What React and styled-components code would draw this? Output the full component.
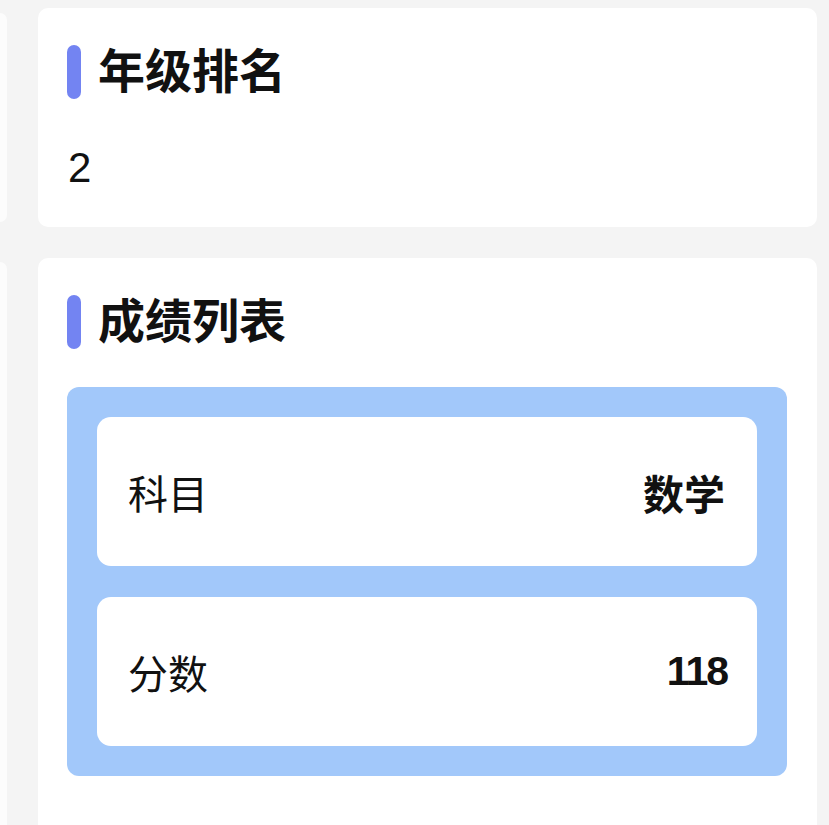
import React from "react";
import styled, { createGlobalStyle } from "styled-components";

const Global = createGlobalStyle`
  html, body { margin: 0; padding: 0; background: #f4f4f4; }
  body { font-family: "Liberation Sans", "Noto Sans CJK SC", sans-serif; color: #111; }
`;

const Page = styled.div`
  display: flex;
  align-items: flex-start;
  gap: 31px;
  padding-top: 8px;
  width: 829px;
  height: 825px;
  overflow: hidden;
  box-sizing: border-box;
`;

const PeekColumn = styled.div`
  width: 7px;
  display: flex;
  flex-direction: column;
  gap: 40px;
  padding-top: 5px;
`;

const PeekCard = styled.div`
  background: #fcfcfc;
  height: ${(p) => p.$h}px;
  border-radius: 0 10px 10px 0;
`;

const Main = styled.div`
  width: 779px;
  display: flex;
  flex-direction: column;
  gap: 31px;
`;

const Card = styled.section`
  background: #fff;
  border-radius: 10px;
  padding: 37px 30px ${(p) => p.$pb}px 29px;
`;

const TitleRow = styled.div`
  display: flex;
  align-items: center;
  gap: 17px;
`;

const Bar = styled.span`
  width: 14px;
  height: 54px;
  border-radius: 7px;
  background: #7384f2;
`;

const Title = styled.h2`
  margin: 0;
  font-size: 47px;
  line-height: 54px;
  font-weight: 700;
  color: #111;
`;

const Value = styled.div`
  margin-top: 45px;
  padding-left: 1px;
  font-size: 42px;
  line-height: 48px;
  color: #111;
`;

const List = styled.div`
  margin-top: 38px;
  background: #a2c8fa;
  border-radius: 12px;
  padding: 30px;
  display: flex;
  flex-direction: column;
  gap: 31px;
`;

const Row = styled.div`
  background: #fff;
  border-radius: 14px;
  height: 149px;
  box-sizing: border-box;
  padding: 0 32px 0 31px;
  display: flex;
  align-items: center;
  justify-content: space-between;
`;

const Label = styled.span`
  font-size: 40px;
  font-weight: 400;
  color: #111;
`;

const RowValue = styled.span`
  font-size: 41px;
  font-weight: 700;
  color: #111;
  letter-spacing: ${(p) => (p.$numeric ? "-2px" : "0")};
  margin-right: ${(p) => (p.$numeric ? "-2px" : "0")};
`;

const rows = [
  { label: "科目", value: "数学" },
  { label: "分数", value: "118", numeric: true },
];

export default function App() {
  return (
    <>
      <Global />
      <Page>
        <PeekColumn>
          <PeekCard $h={209} />
          <PeekCard $h={600} />
        </PeekColumn>
        <Main>
          <Card $pb={35}>
            <TitleRow>
              <Bar />
              <Title>年级排名</Title>
            </TitleRow>
            <Value>2</Value>
          </Card>
          <Card $pb={60}>
            <TitleRow>
              <Bar />
              <Title>成绩列表</Title>
            </TitleRow>
            <List>
              {rows.map((r) => (
                <Row key={r.label}>
                  <Label>{r.label}</Label>
                  <RowValue $numeric={r.numeric}>{r.value}</RowValue>
                </Row>
              ))}
            </List>
          </Card>
        </Main>
      </Page>
    </>
  );
}
